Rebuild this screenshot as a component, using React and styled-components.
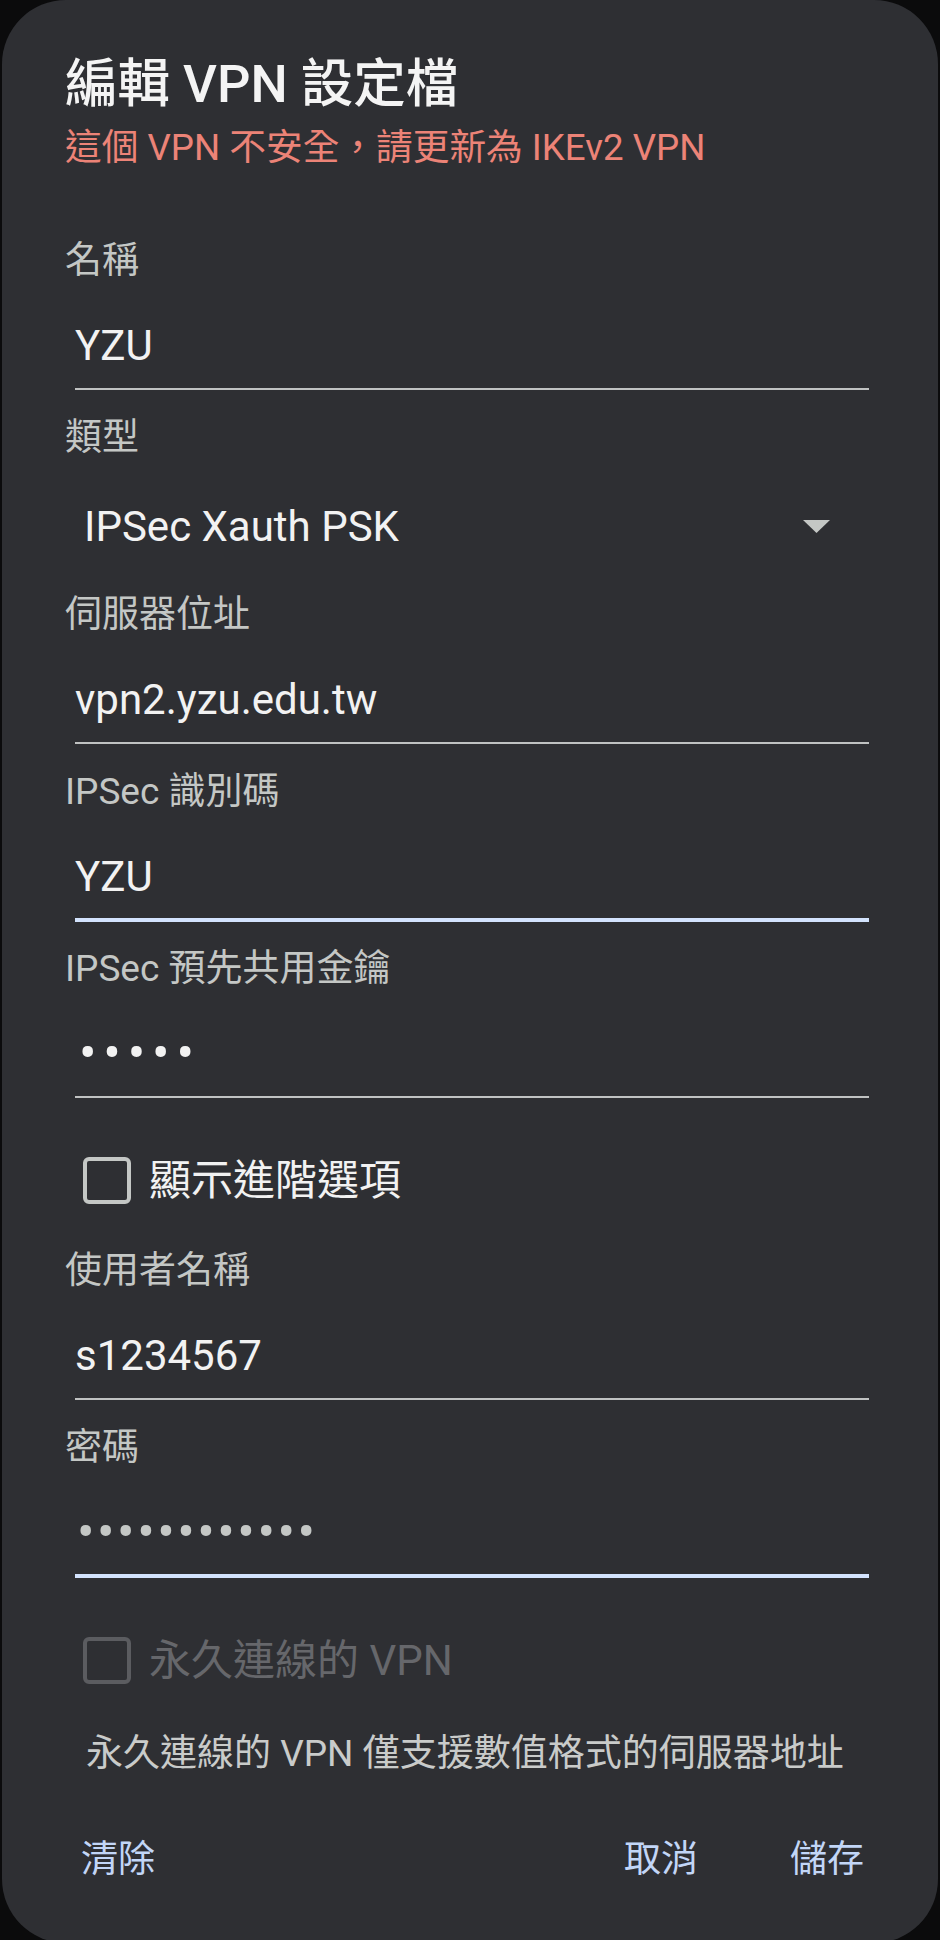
import React from "react";
import styled, { createGlobalStyle } from "styled-components";

const Global = createGlobalStyle`
  html, body {
    margin: 0;
    padding: 0;
    background: #0b0b0c;
    height: 1940px;
    overflow: hidden;
  }
  body {
    font-family: Roboto, "Noto Sans CJK TC", "Noto Sans", sans-serif;
  }
`;

const Dialog = styled.div`
  box-sizing: border-box;
  margin-left: 2px;
  width: 936px;
  height: 1943px;
  border-radius: 64px;
  background: #2e2f33;
  padding: 52px 69px 0 63px;
  display: flex;
  flex-direction: column;
`;

const Title = styled.h1`
  margin: 0;
  font-size: 52.5px;
  line-height: 64px;
  font-weight: 500;
  color: #f4f4f4;
`;

const Warning = styled.div`
  margin-top: 10px;
  font-size: 36.7px;
  line-height: 44px;
  color: #ec8377;
  white-space: nowrap;
`;

const Form = styled.div`
  margin-top: 69px;
  display: flex;
  flex-direction: column;
`;

const Field = styled.div`
  height: 177px;
  display: flex;
  flex-direction: column;
`;

const Label = styled.div`
  font-size: 37px;
  line-height: 44px;
  color: #c4c7c5;
  white-space: nowrap;
`;

const Value = styled.div`
  margin-top: 38px;
  margin-left: 10px;
  height: 50px;
  font-size: ${(p) => p.$size || "42px"};
  line-height: 50px;
  color: ${(p) => (p.$dim ? "#c4c7c5" : "#f2f2f2")};
  letter-spacing: ${(p) => p.$spacing || "0px"};
  padding-left: ${(p) => p.$indent || "0px"};
  white-space: nowrap;
`;

const Underline = styled.div`
  margin-left: 10px;
  margin-top: ${(p) => (p.$focused ? "15.5px" : "16.5px")};
  height: ${(p) => (p.$focused ? "4px" : "2px")};
  background: ${(p) => (p.$focused ? "#d3e3fd" : "#c0c2c2")};
`;

const Spinner = styled.div`
  margin-top: 41.5px;
  height: 50px;
  padding-left: 19px;
  padding-right: 39px;
  display: flex;
  align-items: center;
  justify-content: space-between;
  font-size: 42px;
  line-height: 50px;
  color: #f2f2f2;
`;

const Caret = styled.svg`
  width: 27px;
  height: 13px;
  display: block;
`;

const CheckRow = styled.label`
  height: 125px;
  box-sizing: border-box;
  padding-top: ${(p) => p.$top || "33px"};
  padding-left: 18px;
  display: flex;
  align-items: flex-start;
  gap: 18px;
`;

const Box = styled.span`
  box-sizing: border-box;
  width: 48px;
  height: 47px;
  border: 4.5px solid ${(p) => (p.$disabled ? "#5b5c60" : "#c4c7c5")};
  border-radius: 6px;
  flex: none;
`;

const CheckText = styled.span`
  font-size: 42px;
  line-height: 47px;
  color: ${(p) => (p.$disabled ? "#66676b" : "#f2f2f2")};
`;

const Helper = styled.div`
  margin-top: 4px;
  padding-left: 21px;
  font-size: 37px;
  line-height: 44px;
  color: #c9cbca;
  white-space: nowrap;
`;

const Actions = styled.div`
  margin-top: 62px;
  padding-left: 16px;
  padding-right: 5px;
  display: flex;
  align-items: center;
`;

const ActionButton = styled.button`
  background: none;
  border: 0;
  padding: 0;
  font-family: inherit;
  font-size: 37px;
  line-height: 44px;
  font-weight: 400;
  color: #c2d6f7;
  margin-left: ${(p) => p.$gap || "0px"};
`;

const Spacer = styled.div`
  flex: 1;
`;

function TextField({ label, value, focused, dim, spacing, indent, size }) {
  return (
    <Field>
      <Label>{label}</Label>
      <Value $dim={dim} $spacing={spacing} $indent={indent} $size={size}>
        {value}
      </Value>
      <Underline $focused={focused} />
    </Field>
  );
}

export default function App() {
  return (
    <>
      <Global />
      <Dialog>
        <Title>編輯 VPN 設定檔</Title>
        <Warning>這個 VPN 不安全，請更新為 IKEv2 VPN</Warning>
        <Form>
          <TextField label="名稱" value="YZU" />
          <Field>
            <Label>類型</Label>
            <Spinner>
              <span>IPSec Xauth PSK</span>
              <Caret viewBox="0 0 27 13">
                <polygon points="0,0 27,0 13.5,13" fill="#c4c7c5" />
              </Caret>
            </Spinner>
          </Field>
          <TextField label="伺服器位址" value="vpn2.yzu.edu.tw" />
          <TextField label="IPSec 識別碼" value="YZU" focused />
          <TextField
            label="IPSec 預先共用金鑰"
            value="•••••"
            size="52px"
            spacing="6.8px"
            indent="4px"
          />
          <CheckRow>
            <Box />
            <CheckText>顯示進階選項</CheckText>
          </CheckRow>
          <TextField label="使用者名稱" value="s1234567" />
          <TextField
            label="密碼"
            value="••••••••••••"
            focused
            dim
            size="52px"
            spacing="2.5px"
            indent="2px"
          />
          <CheckRow $top="34px">
            <Box $disabled />
            <CheckText $disabled>永久連線的 VPN</CheckText>
          </CheckRow>
          <Helper>永久連線的 VPN 僅支援數值格式的伺服器地址</Helper>
          <Actions>
            <ActionButton>清除</ActionButton>
            <Spacer />
            <ActionButton>取消</ActionButton>
            <ActionButton $gap="92px">儲存</ActionButton>
          </Actions>
        </Form>
      </Dialog>
    </>
  );
}
